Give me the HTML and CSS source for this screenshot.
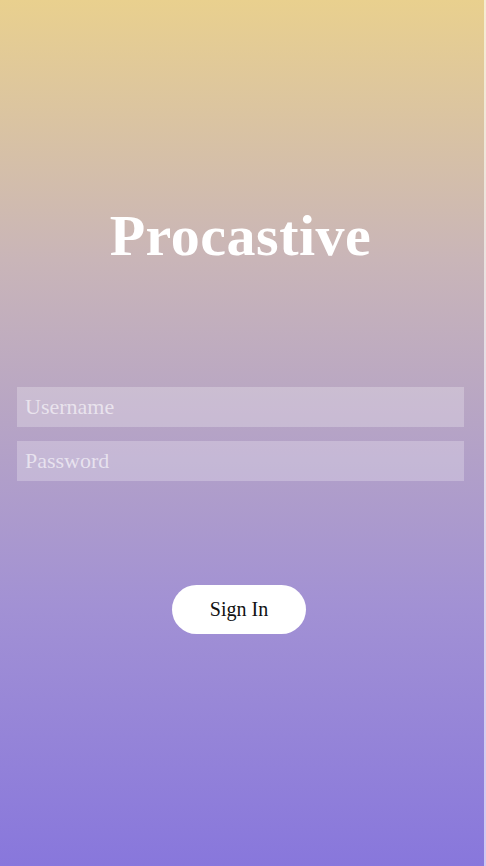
FILE: index.html
```html
<!DOCTYPE html>
<html lang="en">
<head>
<meta charset="utf-8">
<title>Procastive</title>
<link rel="stylesheet" href="styles.css">
</head>
<body>
<main class="screen">
  <h1 class="title">Procastive</h1>
  <form class="form">
    <input class="field" type="text" placeholder="Username">
    <input class="field" type="password" placeholder="Password">
    <button class="signin" type="button">Sign In</button>
  </form>
</main>
</body>
</html>
```
FILE: styles.css
```css
html, body {
  margin: 0;
  padding: 0;
  height: 100%;
}
body {
  background: linear-gradient(rgba(255,255,255,0.6), rgba(255,255,255,0.6)), linear-gradient(#e9d08e, #b7a7c8 50%, #8877dc);
  font-family: "Liberation Serif", "DejaVu Serif", serif;
}
.screen {
  width: 484px;
  height: 866px;
  box-sizing: border-box;
  background: linear-gradient(to bottom, #e9d08e 0%, #c9b5b8 30%, #b5a3c6 50%, #a291d4 70%, #8877dc 100%);
  display: flex;
  flex-direction: column;
  padding: 0 20px 0 17px;
}
.title {
  margin: 204px 0 0;
  text-align: center;
  color: #ffffff;
  font-size: 58px;
  line-height: 64px;
  font-weight: 700;
  letter-spacing: 0.5px;
  padding-left: 0;
}
.form {
  margin-top: 119px;
  display: flex;
  flex-direction: column;
}
.field {
  height: 40px;
  border: none;
  outline: none;
  margin: 0 0 14px;
  padding: 0 8px;
  background: rgba(255,255,255,0.25);
  font-family: inherit;
  font-size: 22px;
  color: #ffffff;
}
.field::placeholder {
  color: rgba(255,255,255,0.6);
}
.signin {
  align-self: center;
  margin: 90px 0 0 -3px;
  width: 134px;
  height: 49px;
  border: none;
  border-radius: 25px;
  background: #ffffff;
  color: #111111;
  font-family: inherit;
  font-size: 20px;
}
```
